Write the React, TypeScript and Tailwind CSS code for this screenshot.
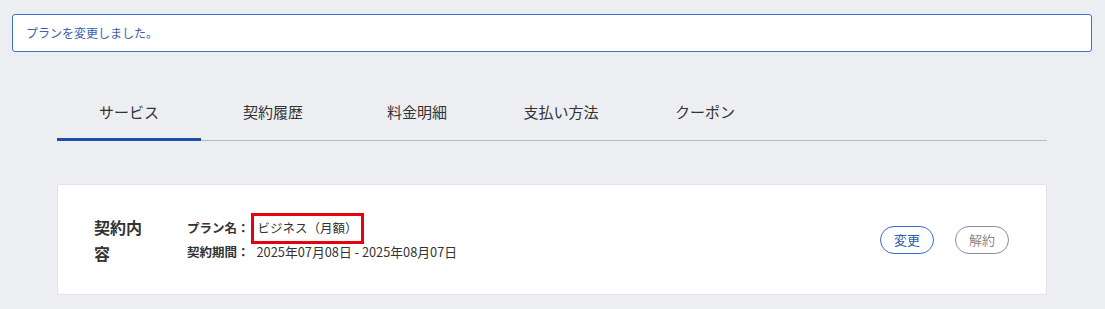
export default function App() {
  const tabs = ["サービス", "契約履歴", "料金明細", "支払い方法", "クーポン"];

  return (
    <div
      className="min-h-[309px] w-full bg-[#edeef2] pt-[14px] text-[#333]"
      style={{ fontFamily: '"Noto Sans CJK JP", "Noto Sans", sans-serif' }}
    >
      {/* notice */}
      <div className="mx-[12px] mr-[13px] flex h-[38px] items-center rounded-[3px] border border-[#3d6fcf] bg-white px-[13px] text-[12px] text-[#3b61ac]">
        プランを変更しました。
      </div>

      {/* tabs */}
      <div className="ml-[57px] mr-[58px] mt-[36px] flex border-b border-[#b9b9bb]">
        {tabs.map((tab, i) => (
          <div
            key={tab}
            className={
              "mb-[-1px] flex h-[53px] w-[144px] items-center justify-center border-b-[3px] pb-[2px] text-[15px] " +
              (i === 0 ? "border-[#1f4ea8]" : "border-transparent")
            }
          >
            {tab}
          </div>
        ))}
      </div>

      {/* contract card */}
      <div className="ml-[57px] mr-[58px] mt-[43px] flex h-[111px] items-center rounded-[3px] border border-[#e2e3e7] bg-white pl-[36px] pr-[37px]">
        <h2 className="mr-[37px] w-[56px] text-[16px] font-bold leading-[26px]">契約内容</h2>
        <div className="flex-1 text-[12.5px] leading-[24px]">
          <div className="flex">
            <span className="font-bold">プラン名：</span>
            <span className="relative ml-[8px]">
              ビジネス（月額）
              <span className="absolute -left-[7px] -right-[6px] -top-[3px] -bottom-[4px] border-[3px] border-[#e8000b]" />
            </span>
          </div>
          <div className="flex">
            <span className="font-bold">契約期間：</span>
            <span className="ml-[7px] text-[12.8px]">2025年07月08日 - 2025年08月07日</span>
          </div>
        </div>
        <div className="flex gap-[21px]">
          <button className="h-[28px] w-[54px] rounded-full border border-[#3a6bc8] text-[13px] text-[#2f5aae]">
            変更
          </button>
          <button className="h-[28px] w-[54px] rounded-full border border-[#8a8e9c] text-[13px] text-[#888]">
            解約
          </button>
        </div>
      </div>
    </div>
  );
}
